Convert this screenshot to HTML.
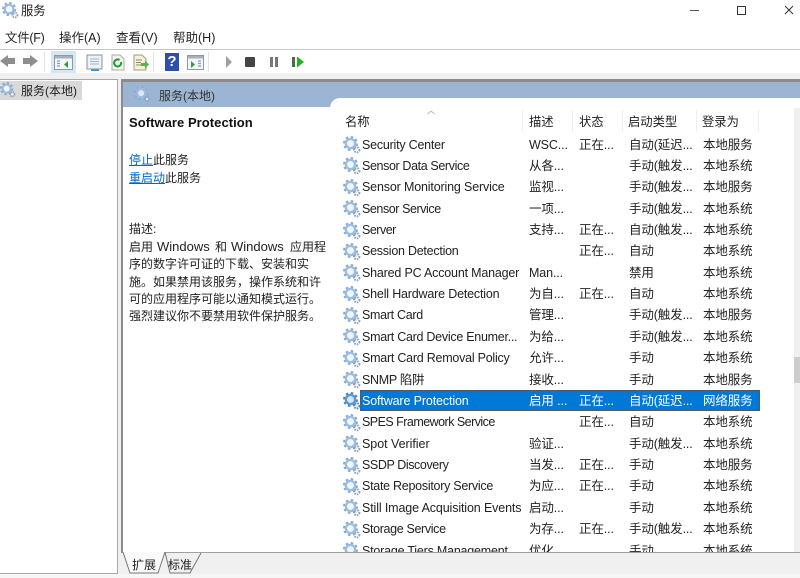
<!DOCTYPE html>
<html><head><meta charset="utf-8"><style>
html,body{margin:0;padding:0;background:#f0f0f0}
#p{position:relative;width:800px;height:578px;overflow:hidden;background:#f0f0f0;font:12px/16px "Liberation Sans","Noto Sans CJK SC",sans-serif;color:#222;filter:blur(.3px)}
.a{position:absolute}
.t{position:absolute;white-space:nowrap}
.r{position:absolute;left:342px;width:418px;height:21px;font-size:12.5px}
.r span{position:absolute;top:2.600px;white-space:nowrap;letter-spacing:-.12px}
.r svg{position:absolute;left:1px;top:2px;width:18px;height:18px}
.r .n{left:20px}.r .d{left:187px}.r .s{left:237px}.r .y{left:287px}.r .l{left:361px}
.sel{background:#0078d7;left:360px;width:400px;outline:1px solid #505a66;outline-offset:-1px}
.h{position:absolute;top:114px;white-space:nowrap;font-size:12.3px}
.v{position:absolute;top:110px;width:1px;height:22px;background:#eeeeee}
.w{font-size:13px}
</style></head><body><div id="p">
<svg width="0" height="0" style="position:absolute"><defs>
<symbol id="g" viewBox="0 0 18 18">
<circle cx="7.5" cy="7.5" r="6.300" fill="none" stroke="#86a8d2" stroke-width="2.400" stroke-dasharray="2.500 2.450"/>
<circle cx="7.5" cy="7.5" r="4.600" fill="none" stroke="#9cbde2" stroke-width="2.400"/>
<circle cx="7.5" cy="7.5" r="3.200" fill="#f2f6fb"/>
<circle cx="13.8" cy="13.8" r="2.600" fill="none" stroke="#92a2b4" stroke-width="2" stroke-dasharray="1.500 1"/>
<circle cx="13.8" cy="13.8" r="1.200" fill="#f2f4f6"/>
</symbol>
<symbol id="g2" viewBox="0 0 18 18">
<circle cx="7.5" cy="7.5" r="6.300" fill="none" stroke="#4a84c8" stroke-width="2.400" stroke-dasharray="2.500 2.450"/>
<circle cx="7.5" cy="7.5" r="4.600" fill="none" stroke="#5a96d8" stroke-width="2.400"/>
<circle cx="7.5" cy="7.5" r="3.200" fill="#d8e6f5"/>
<circle cx="13.8" cy="13.8" r="2.600" fill="none" stroke="#5a86b8" stroke-width="2" stroke-dasharray="1.500 1"/>
<circle cx="13.8" cy="13.8" r="1.200" fill="#dfe8f2"/>
</symbol></defs></svg>

<!-- title bar -->
<div class="a" style="left:0;top:0;width:800px;height:23px;background:#fff"></div>
<svg class="a" style="left:2px;top:2px;width:17px;height:17px"><use href="#g"/></svg>
<div class="t" style="left:21px;top:3px;font-size:12.3px">服务</div>
<div class="a" style="left:690px;top:10px;width:9px;height:1px;background:#555"></div>
<div class="a" style="left:737px;top:6px;width:7px;height:7px;border:1px solid #333"></div>
<svg class="a" style="left:784px;top:5px;width:10px;height:10px"><path d="M1 1L9 9M9 1L1 9" stroke="#333" stroke-width="1"/></svg>

<!-- menu -->
<div class="a" style="left:0;top:23px;width:800px;height:26px;background:#fff"></div>
<div class="t" style="left:5px;top:30px;font-size:12.5px;letter-spacing:-.3px">文件(F)</div>
<div class="t" style="left:59px;top:30px;font-size:12.5px">操作(A)</div>
<div class="t" style="left:116px;top:30px;font-size:12.5px">查看(V)</div>
<div class="t" style="left:173px;top:30px;font-size:12.5px">帮助(H)</div>
<div class="a" style="left:0;top:49px;width:800px;height:1px;background:#c4c4c4"></div>

<!-- toolbar -->
<div class="a" style="left:0;top:50px;width:800px;height:23px;background:#fff"></div>
<svg class="a" style="left:0;top:52px;width:40px;height:18px"><path d="M0 9L8 3V6H15V12H8V15Z" fill="#8e8e8e"/><path d="M38 9L30 3V6H23V12H30V15Z" fill="#8e8e8e"/></svg>
<div class="a" style="left:44px;top:52px;width:1px;height:20px;background:#e4e4e4"></div>
<div class="a" style="left:51px;top:51px;width:25px;height:22px;background:#d3e7f7"></div>
<svg class="a" style="left:54px;top:55px;width:20px;height:16px"><rect x=".5" y=".5" width="18" height="14" fill="#f4f6f8" stroke="#8d99a3"/><rect x="1" y="1" width="17" height="2.500" fill="#a8b0b8"/><path d="M3 6h3M3 8.500h3M3 11h3" stroke="#7fa0bc" stroke-width="1.300"/><path d="M14 6v7l-4-3.500z" fill="#2e9e4a"/></svg>
<svg class="a" style="left:86px;top:54px;width:18px;height:18px"><rect x="1" y="1" width="15" height="14" fill="#eef1f4" stroke="#8a949e"/><path d="M4 5h9M4 7.500h9M4 10h9" stroke="#a5b6c6"/><rect x="5" y="15.500" width="8" height="1.500" fill="#2c9be0"/></svg>
<svg class="a" style="left:110px;top:54px;width:16px;height:18px"><path d="M2 1h8l4 4v11H2z" fill="#f5f5f0" stroke="#aaa"/><path d="M11 8a3.500 3.500 0 1 1-1.500-2" fill="none" stroke="#1e9a3c" stroke-width="2"/></svg>
<svg class="a" style="left:132px;top:54px;width:18px;height:18px"><path d="M2 1h8l4 4v11H2z" fill="#f6f1d8" stroke="#a09a80"/><path d="M4 6h6M4 8.500h5M4 11h5" stroke="#8a8a70"/><path d="M9 9h4V6.500l4 4-4 4V12H9z" fill="#5ab24a"/></svg>
<div class="a" style="left:153px;top:52px;width:1px;height:20px;background:#e4e4e4"></div>
<div class="t" style="left:165px;top:53px;width:14px;height:18px;background:#2d4fa6;color:#fff;font-weight:bold;font-size:15px;line-height:17px;text-align:center">?</div>
<svg class="a" style="left:187px;top:55px;width:18px;height:16px"><rect x=".5" y=".5" width="16" height="14" fill="#f4f6f8" stroke="#8d99a3"/><rect x="1" y="1" width="15" height="2.500" fill="#a8b0b8"/><path d="M4 6v7l4-3.500z" fill="#2e9e4a"/><path d="M11 6h3M11 8.500h3M11 11h3" stroke="#7fa0bc" stroke-width="1.300"/></svg>
<div class="a" style="left:208px;top:52px;width:1px;height:20px;background:#e4e4e4"></div>
<svg class="a" style="left:225px;top:55px;width:85px;height:14px"><path d="M1 1L7 7L1 13Z" fill="#a0a0a0"/><rect x="20" y="2" width="10" height="10" rx="1" fill="#444"/><rect x="45" y="2" width="3" height="10" fill="#777"/><rect x="50" y="2" width="3" height="10" fill="#777"/><rect x="67" y="2" width="3" height="10" fill="#4d6a4d"/><path d="M72 1.500L79 7L72 12.500Z" fill="#1eb41e"/></svg>

<!-- left pane -->
<div class="a" style="left:-2px;top:79px;width:119px;height:493px;background:#fff;border:solid #a8a8a8;border-width:1.500px 1.500px 2px 0"></div>
<div class="a" style="left:0;top:81px;width:82px;height:19px;background:#d9d9d9"></div>
<svg class="a" style="left:0;top:82px;width:16px;height:16px"><use href="#g"/></svg>
<div class="t" style="left:21px;top:83px;font-size:12px">服务(本地)</div>

<!-- right pane -->
<div class="a" style="left:121px;top:79px;width:679px;height:474px;background:#fff;border-top:3px solid #8c8c8c;border-left:2px solid #8c8c8c;border-bottom:1px solid #a0a0a0;box-sizing:border-box"></div>
<div class="a" style="left:123px;top:82px;width:677px;height:25px;background:#9bb5d3"></div>
<svg class="a" style="left:134px;top:86px;width:17px;height:17px" opacity=".8"><use href="#g"/></svg>
<div class="t" style="left:159px;top:88px;color:#333;font-size:12px">服务(本地)</div>
<div class="a" style="left:330px;top:98px;width:470px;height:12px;background:#fff;border-radius:10px 0 0 0"></div>

<div class="t" style="left:129px;top:115px;font-weight:bold;font-size:13px;letter-spacing:.05px;color:#111">Software Protection</div>
<div class="t" style="left:129px;top:152px"><span style="color:#0066cc;text-decoration:underline">停止</span>此服务</div>
<div class="t" style="left:129px;top:170px"><span style="color:#0066cc;text-decoration:underline">重启动</span>此服务</div>
<div class="t" style="left:129px;top:221px">描述:</div>
<div class="t" style="left:129px;top:239px">启用</div><div class="t w" style="left:157px;top:239px">Windows</div><div class="t" style="left:215px;top:239px">和</div><div class="t w" style="left:231px;top:239px">Windows</div><div class="t" style="left:290px;top:239px">应用程</div>
<div class="t" style="left:129px;top:256px">序的数字许可证的下载、安装和实</div>
<div class="t" style="left:129px;top:274px">施。如果禁用该服务，操作系统和许</div>
<div class="t" style="left:129px;top:291px">可的应用程序可能以通知模式运行。</div>
<div class="t" style="left:129px;top:308px">强烈建议你不要禁用软件保护服务。</div>

<!-- headers -->
<div class="h" style="left:345px">名称</div>
<div class="h" style="left:529px">描述</div>
<div class="h" style="left:579px">状态</div>
<div class="h" style="left:628px">启动类型</div>
<div class="h" style="left:702px">登录为</div>
<svg class="a" style="left:427px;top:110px;width:8px;height:5px"><path d="M.5 4L4 1L7.500 4" fill="none" stroke="#bbb"/></svg>
<div class="v" style="left:522px"></div><div class="v" style="left:572px"></div><div class="v" style="left:622px"></div><div class="v" style="left:696px"></div><div class="v" style="left:758px"></div>

<!-- rows -->
<div class="a" style="left:0;top:134px;width:800px;height:418px;overflow:hidden">
<div class="r" style="top:0px"><svg><use href="#g"/></svg><span class="n" style="letter-spacing:-.22px">Security Center</span><span class="d">WSC...</span><span class="s">正在...</span><span class="y">自动(延迟...</span><span class="l">本地服务</span></div>
<div class="r" style="top:21.400px"><svg><use href="#g"/></svg><span class="n" style="letter-spacing:-.38px">Sensor Data Service</span><span class="d">从各...</span><span class="y">手动(触发...</span><span class="l">本地系统</span></div>
<div class="r" style="top:42.700px"><svg><use href="#g"/></svg><span class="n" style="letter-spacing:-.16px">Sensor Monitoring Service</span><span class="d">监视...</span><span class="y">手动(触发...</span><span class="l">本地服务</span></div>
<div class="r" style="top:64.100px"><svg><use href="#g"/></svg><span class="n" style="letter-spacing:-.43px">Sensor Service</span><span class="d">一项...</span><span class="y">手动(触发...</span><span class="l">本地系统</span></div>
<div class="r" style="top:85.500px"><svg><use href="#g"/></svg><span class="n" style="letter-spacing:-.5px">Server</span><span class="d">支持...</span><span class="s">正在...</span><span class="y">自动(触发...</span><span class="l">本地系统</span></div>
<div class="r" style="top:106.800px"><svg><use href="#g"/></svg><span class="n" style="letter-spacing:-.25px">Session Detection</span><span class="s">正在...</span><span class="y">自动</span><span class="l">本地系统</span></div>
<div class="r" style="top:128.200px"><svg><use href="#g"/></svg><span class="n" style="letter-spacing:-.19px">Shared PC Account Manager</span><span class="d">Man...</span><span class="y">禁用</span><span class="l">本地系统</span></div>
<div class="r" style="top:149.600px"><svg><use href="#g"/></svg><span class="n" style="letter-spacing:-.18px">Shell Hardware Detection</span><span class="d">为自...</span><span class="s">正在...</span><span class="y">自动</span><span class="l">本地系统</span></div>
<div class="r" style="top:170.900px"><svg><use href="#g"/></svg><span class="n" style="letter-spacing:-.3px">Smart Card</span><span class="d">管理...</span><span class="y">手动(触发...</span><span class="l">本地服务</span></div>
<div class="r" style="top:192.300px"><svg><use href="#g"/></svg><span class="n" style="letter-spacing:-.27px">Smart Card Device Enumer...</span><span class="d">为给...</span><span class="y">手动(触发...</span><span class="l">本地系统</span></div>
<div class="r" style="top:213.700px"><svg><use href="#g"/></svg><span class="n" style="letter-spacing:-.24px">Smart Card Removal Policy</span><span class="d">允许...</span><span class="y">手动</span><span class="l">本地系统</span></div>
<div class="r" style="top:235px"><svg><use href="#g"/></svg><span class="n" style="letter-spacing:-.3px">SNMP 陷阱</span><span class="d">接收...</span><span class="y">手动</span><span class="l">本地服务</span></div>
<div class="a sel" style="top:256px;height:21px"></div>
<div class="r" style="top:256.400px;color:#fff"><svg><use href="#g2"/></svg><span class="n" style="letter-spacing:-.13px">Software Protection</span><span class="d">启用 ...</span><span class="s">正在...</span><span class="y">自动(延迟...</span><span class="l">网络服务</span></div>
<div class="r" style="top:277.800px"><svg><use href="#g"/></svg><span class="n" style="letter-spacing:-.53px">SPES Framework Service</span><span class="s">正在...</span><span class="y">自动</span><span class="l">本地系统</span></div>
<div class="r" style="top:299.100px"><svg><use href="#g"/></svg><span class="n" style="letter-spacing:-.04px">Spot Verifier</span><span class="d">验证...</span><span class="y">手动(触发...</span><span class="l">本地系统</span></div>
<div class="r" style="top:320.500px"><svg><use href="#g"/></svg><span class="n" style="letter-spacing:-.41px">SSDP Discovery</span><span class="d">当发...</span><span class="s">正在...</span><span class="y">手动</span><span class="l">本地服务</span></div>
<div class="r" style="top:341.900px"><svg><use href="#g"/></svg><span class="n" style="letter-spacing:-.27px">State Repository Service</span><span class="d">为应...</span><span class="s">正在...</span><span class="y">手动</span><span class="l">本地系统</span></div>
<div class="r" style="top:363.200px"><svg><use href="#g"/></svg><span class="n" style="letter-spacing:-.13px">Still Image Acquisition Events</span><span class="d">启动...</span><span class="y">手动</span><span class="l">本地系统</span></div>
<div class="r" style="top:384.600px"><svg><use href="#g"/></svg><span class="n" style="letter-spacing:-.35px">Storage Service</span><span class="d">为存...</span><span class="s">正在...</span><span class="y">手动(触发...</span><span class="l">本地系统</span></div>
<div class="r" style="top:406px"><svg><use href="#g"/></svg><span class="n" style="letter-spacing:-.21px">Storage Tiers Management</span><span class="d">优化...</span><span class="y">手动</span><span class="l">本地系统</span></div>
</div>

<!-- scrollbar -->
<div class="a" style="left:794px;top:108px;width:6px;height:444px;background:#f0f0f0"></div>
<div class="a" style="left:794px;top:357px;width:6px;height:26px;background:#cdcdcd"></div>

<!-- tabs -->
<svg class="a" style="left:120px;top:552px;width:90px;height:23px"><path d="M3 0L10 21H38L45 0" fill="#fafafa" stroke="#777"/><path d="M45 0L50 21H70L81 1" fill="none" stroke="#777"/></svg>
<div class="t" style="left:132px;top:557px">扩展</div>
<div class="t" style="left:168px;top:557px">标准</div>
<div class="a" style="left:118px;top:574px;width:682px;height:4px;background:#f6f6f6"></div>
<div class="a" style="left:0;top:574px;width:118px;height:4px;background:#f6f6f6"></div>
</div></body></html>
